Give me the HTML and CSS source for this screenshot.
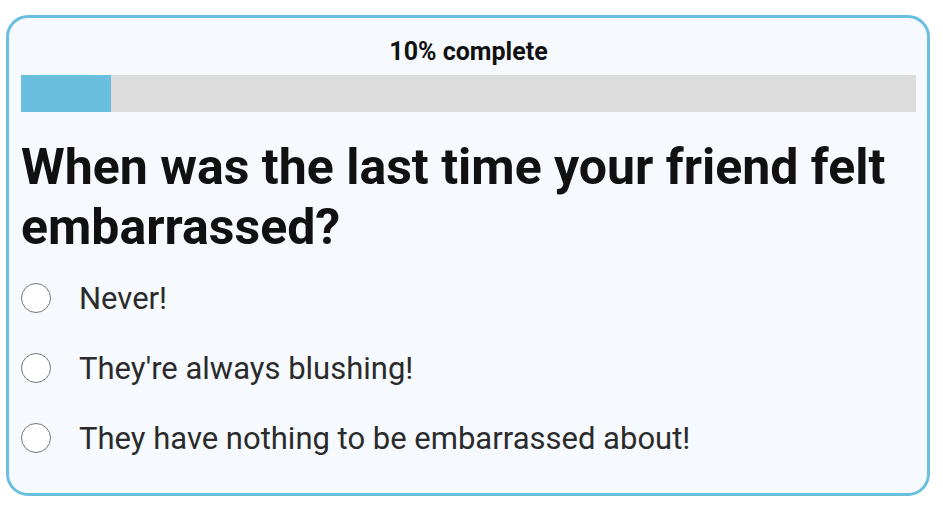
FILE: index.html
```html
<!DOCTYPE html>
<html>
<head>
<meta charset="utf-8">
<link rel="stylesheet" href="styles.css">
</head>
<body>
<div class="card">
  <div class="progress-label">10% complete</div>
  <div class="progress"><div class="progress-fill" style="width:10%"></div></div>
  <h1 class="question">When was the last time your friend felt embarrassed?</h1>
  <div class="options">
    <label class="option"><span class="radio"></span><span class="option-text">Never!</span></label>
    <label class="option"><span class="radio"></span><span class="option-text">They're always blushing!</span></label>
    <label class="option"><span class="radio"></span><span class="option-text">They have nothing to be embarrassed about!</span></label>
  </div>
</div>
</body>
</html>
```
FILE: styles.css
```css
html, body {
  margin: 0;
  background: #ffffff;
}
body {
  padding: 15px 13px 0 6px;
  font-family: Roboto, "Liberation Sans", sans-serif;
}
.card {
  box-sizing: border-box;
  width: 924px;
  height: 481px;
  border: 3px solid #69bfdd;
  border-radius: 22px;
  background: #f6faff;
  padding: 18px 11px 0 12px;
}
.progress-label {
  text-align: center;
  font-weight: 700;
  font-size: 25px;
  line-height: 32px;
  color: #111;
}
.progress {
  margin-top: 7px;
  height: 37px;
  background: #dcdcdc;
}
.progress-fill {
  height: 100%;
  background: #69bfdd;
}
.question {
  margin: 25px 0 21px;
  font-size: 50px;
  line-height: 60px;
  font-weight: 700;
  color: #111;
}
.options {
  display: flex;
  flex-direction: column;
  gap: 30px;
}
.option {
  display: flex;
  align-items: center;
  gap: 28px;
  height: 40px;
}
.radio {
  box-sizing: border-box;
  width: 30px;
  height: 30px;
  border: 1.5px solid #767676;
  border-radius: 50%;
  background: #fff;
  flex: none;
}
.option-text {
  font-size: 31px;
  color: #2b2b2b;
}
```
